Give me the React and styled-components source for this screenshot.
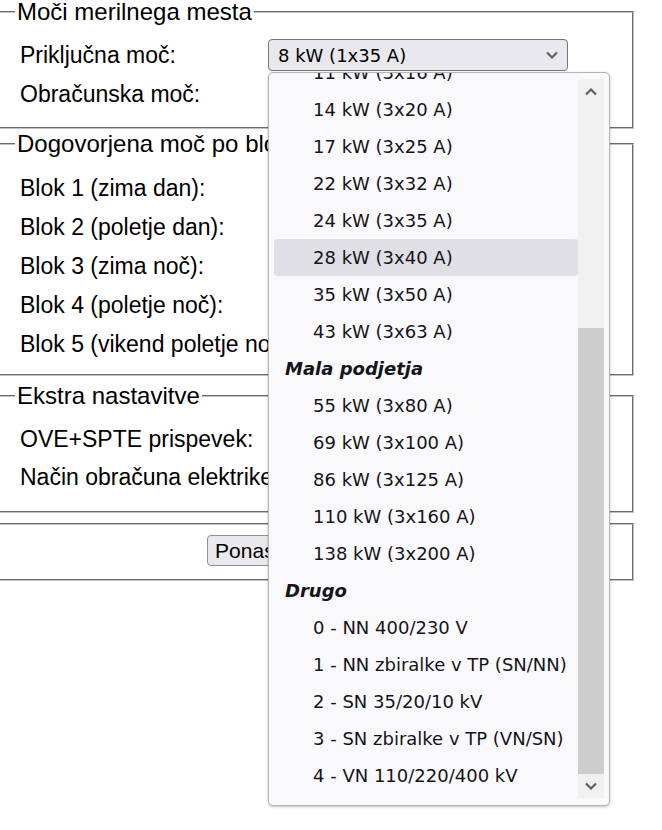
import styled, { createGlobalStyle } from "styled-components"

const Global = createGlobalStyle`
    body {
        margin: 0;
        font-family: "Liberation Sans", Arial, sans-serif;
        font-size: 24px;
        color: #000;
        background: #fff;
    }
`

const Page = styled.div`
    position: relative;
    width: 637px;
    margin-left: -3px;
    height: 830px;
    overflow: hidden;
`

const Fieldset = styled.fieldset`
    margin: 0 0 ${(p) => p.gap}px 0;
    padding: ${(p) => p.pad};
    border: 2px groove #c0c0c0;
    text-align: ${(p) => (p.center ? "center" : "left")};
`

const Legend = styled.legend`
    padding: 0 2px;
    margin-left: -5px;
    font-size: 24px;
    line-height: 24px;
`

const Row = styled.div`
    height: ${(p) => p.h || 39}px;
    display: flex;
    align-items: center;
    font-size: 23px;
`

const Label = styled.span`
    width: 248px;
    white-space: nowrap;
`

const Select = styled.div`
    width: 300px;
    height: 32px;
    box-sizing: border-box;
    background: #e9e9ed;
    border: 1px solid #767676;
    border-radius: 4px;
    display: flex;
    align-items: center;
    justify-content: space-between;
    padding: 0 8px 0 9px;
    font-family: "DejaVu Sans", Verdana, sans-serif;
    font-size: 18px;
`

const Button = styled.button`
    height: 31px;
    padding: 0 7px;
    font-family: "Liberation Sans", Arial, sans-serif;
    font-size: 21px;
    background: #e9e9ed;
    border: 1px solid #8f8f9d;
    border-radius: 4px;
`

const Popup = styled.div`
    position: absolute;
    left: 271px;
    top: 72px;
    width: 342px;
    height: 734px;
    box-sizing: border-box;
    background: #f9f9fb;
    border: 1px solid #b5b5b5;
    border-radius: 5px;
    box-shadow: 0 1px 3px rgba(0, 0, 0, 0.25);
    overflow: hidden;
    display: flex;
    font-family: "DejaVu Sans", Verdana, sans-serif;
    font-size: 18px;
    color: #15141a;
`

const List = styled.div`
    flex: 1;
    padding: 0 0 0 5px;
    margin-top: -19px;
`

const Option = styled.div`
    height: 37px;
    display: flex;
    align-items: center;
    padding-left: ${(p) => (p.group ? 11 : 39)}px;
    font-weight: ${(p) => (p.group ? "bold" : "normal")};
    font-style: ${(p) => (p.group ? "italic" : "normal")};
    background: ${(p) => (p.active ? "#e0dfe5" : "transparent")};
    border-radius: 3px;
    white-space: nowrap;
`

const Track = styled.div`
    width: 26px;
    margin: 6px 5px 7px 0;
    background: #f0f0f0;
    display: flex;
    flex-direction: column;
`

const Arrow = styled.div`
    height: 24px;
    display: flex;
    align-items: center;
    justify-content: center;
`

const Thumb = styled.div`
    margin-top: 225px;
    height: 446px;
    background: #cdcdcd;
`

const Spacer = styled.div`
    flex: 1;
`

const Chevron = ({ up }) => (
    <svg width="14" height="9" viewBox="0 0 14 9">
        <path d={up ? "M2 7.5L7 2.5L12 7.5" : "M2 1.5L7 6.5L12 1.5"} fill="none" stroke="#606060" strokeWidth="2.2" />
    </svg>
)

const options = [
    ["11 kW (3x16 A)"],
    ["14 kW (3x20 A)"],
    ["17 kW (3x25 A)"],
    ["22 kW (3x32 A)"],
    ["24 kW (3x35 A)"],
    ["28 kW (3x40 A)", "active"],
    ["35 kW (3x50 A)"],
    ["43 kW (3x63 A)"],
    ["Mala podjetja", "group"],
    ["55 kW (3x80 A)"],
    ["69 kW (3x100 A)"],
    ["86 kW (3x125 A)"],
    ["110 kW (3x160 A)"],
    ["138 kW (3x200 A)"],
    ["Drugo", "group"],
    ["0 - NN 400/230 V"],
    ["1 - NN zbiralke v TP (SN/NN)"],
    ["2 - SN 35/20/10 kV"],
    ["3 - SN zbiralke v TP (VN/SN)"],
    ["4 - VN 110/220/400 kV"],
]

const App = () => (
    <Page>
        <Global />
        <Fieldset pad="12px 0 13px 21px" gap={3}>
            <Legend>Moči merilnega mesta</Legend>
            <Row h={38}>
                <Label>Priključna moč:</Label>
                <Select>
                    <span>8 kW (1x35 A)</span>
                    <Chevron />
                </Select>
            </Row>
            <Row h={40}>
                <Label>Obračunska moč:</Label>
            </Row>
        </Fieldset>
        <Fieldset pad="13px 0 10px 21px" gap={8}>
            <Legend>Dogovorjena moč po blokih</Legend>
            <Row><Label>Blok 1 (zima dan):</Label></Row>
            <Row><Label>Blok 2 (poletje dan):</Label></Row>
            <Row><Label>Blok 3 (zima noč):</Label></Row>
            <Row><Label>Blok 4 (poletje noč):</Label></Row>
            <Row><Label>Blok 5 (vikend poletje noč):</Label></Row>
        </Fieldset>
        <Fieldset pad="12px 0 15px 21px" gap={10}>
            <Legend>Ekstra nastavitve</Legend>
            <Row h={38}><Label>OVE+SPTE prispevek:</Label></Row>
            <Row h={38}><Label>Način obračuna elektrike:</Label></Row>
        </Fieldset>
        <Fieldset center pad="10px 0 13px 21px" gap={0}>
            <Button>Ponastavi vse vrednosti</Button>
        </Fieldset>
        <Popup>
            <List>
                {options.map(([text, kind]) => (
                    <Option key={text} group={kind === "group"} active={kind === "active"}>
                        {text}
                    </Option>
                ))}
            </List>
            <Track>
                <Arrow><Chevron up /></Arrow>
                <Thumb />
                <Spacer />
                <Arrow><Chevron /></Arrow>
            </Track>
        </Popup>
    </Page>
)

export default App
